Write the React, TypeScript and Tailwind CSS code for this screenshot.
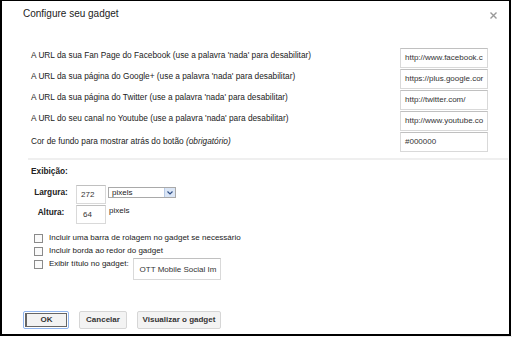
import React from "react";

const urlRows = [
  { label: "A URL da sua Fan Page do Facebook (use a palavra 'nada' para desabilitar)", value: "http://www.facebook.c" },
  { label: "A URL da sua página do Google+ (use a palavra 'nada' para desabilitar)", value: "https://plus.google.cor" },
  { label: "A URL da sua página do Twitter (use a palavra 'nada' para desabilitar)", value: "http://twitter.com/" },
  { label: "A URL do seu canal no Youtube (use a palavra 'nada' para desabilitar)", value: "http://www.youtube.co" },
];

const checks = ["Incluir uma barra de rolagem no gadget se necessário", "Incluir borda ao redor do gadget"];

function TextBox({ value, className }: { value: string; className: string }) {
  return (
    <div
      className={`border border-[#d9d9d9] border-t-[#c0c0c0] bg-white text-[8px] text-[#333] whitespace-nowrap overflow-hidden flex ${className}`}
    >
      {value}
    </div>
  );
}

function Checkbox() {
  return <div className="w-[9px] h-[9px] border border-[#8a8a8a] bg-[#fafafa] shrink-0" />;
}

export default function App() {
  return (
    <div className="w-[512px] h-[337px] bg-white font-['Liberation_Sans',Arial,sans-serif] text-[#222]">
      <div className="w-[511px] h-[336px] border-black border-l-2 border-r-2 border-b-2 border-t flex flex-col">
        {/* header */}
        <div className="flex justify-between items-center pl-[21px] pr-[12px] pt-[6px] h-[20px]">
          <span className="text-[10px] leading-[12px]">Configure seu gadget</span>
          <svg width="7" height="7" viewBox="0 0 7 7" className="mt-[2px]">
            <path d="M0.5 0.5 L6.5 6.5 M6.5 0.5 L0.5 6.5" stroke="#999" strokeWidth="1.4" />
          </svg>
        </div>

        {/* url fields */}
        <div className="flex flex-col gap-[1px] mt-[27px] pl-[29px] pr-[21px]">
          {urlRows.map((r) => (
            <div key={r.label} className="flex justify-between items-start h-[20px]">
              <span className="text-[8.3px] leading-[10px] mt-[2px]">{r.label}</span>
              <TextBox value={r.value} className="w-[88px] h-[20px] items-center pl-[4px]" />
            </div>
          ))}
          <div className="flex justify-between items-start h-[20px]">
            <span className="text-[8.3px] leading-[10px] mt-[4px]">
              Cor de fundo para mostrar atrás do botão <i>(obrigatório)</i>
            </span>
            <TextBox value="#000000" className="w-[88px] h-[20px] items-center pl-[4px]" />
          </div>
        </div>

        <div className="h-[2px] bg-[#efefef] mt-[6px] ml-[26px] mr-[1px]" />

        {/* display options */}
        <div className="pl-[29px] mt-[6px] flex flex-col">
          <span className="text-[8.3px] leading-[10px] font-bold">Exibição:</span>
          <div className="flex items-start mt-[9px]">
            <span className="w-[40px] text-center text-[8.3px] leading-[10px] font-bold mt-[2px]">Largura:</span>
            <TextBox value="272" className="ml-[5px] w-[30px] h-[19px] items-end pb-[2px] pl-[4px]" />
            <div className="ml-[2px] mt-[2px] w-[68px] h-[11px] border border-[#a9a9a9] flex bg-white">
              <span className="flex-1 text-[8px] leading-[9px] pl-[3px] text-[#222]">pixels</span>
              <div className="w-[11px] h-full bg-[#dbe6f6] border-l border-[#b9cbe6] flex items-center justify-center">
                <svg width="6" height="4" viewBox="0 0 6 4">
                  <path d="M0.5 0.5 L3 3 L5.5 0.5" stroke="#2f4f86" strokeWidth="1.2" fill="none" />
                </svg>
              </div>
            </div>
          </div>
          <div className="flex items-start mt-[1px]">
            <span className="w-[40px] text-center text-[8.3px] leading-[10px] font-bold mt-[2px]">Altura:</span>
            <TextBox value="64" className="ml-[5px] w-[30px] h-[19px] items-end pb-[2px] pl-[6px]" />
            <span className="ml-[3px] mt-[1px] text-[8px] leading-[10px]">pixels</span>
          </div>

          <div className="flex flex-col mt-[8px] pl-[3px]">
            {checks.map((c) => (
              <div key={c} className="flex items-center gap-[6px] h-[12px] mb-[1px]">
                <Checkbox />
                <span className="text-[8px] leading-[10px]">{c}</span>
              </div>
            ))}
            <div className="flex items-start gap-[6px]">
              <div className="flex items-center gap-[6px] h-[12px]">
                <Checkbox />
                <span className="text-[8px] leading-[10px]">Exibir título no gadget:</span>
              </div>
              <TextBox value="OTT Mobile Social Im" className="ml-[-2px] w-[88px] h-[22px] items-center pt-[2px] pl-[6px]" />
            </div>
          </div>
        </div>

        {/* buttons */}
        <div className="flex gap-[10px] pl-[21px] mt-auto mb-[5px]">
          <div className="w-[46px] h-[18px] border border-[#8fb4ee] rounded-[2px] p-[1px] flex">
            <div className="flex-1 border border-[#666] border-l-2 bg-[#f3f3f3] flex items-center justify-center text-[8px] font-bold text-[#333]">
              OK
            </div>
          </div>
          <div className="w-[48px] h-[18px] border border-[#d6d6d6] rounded-[2px] bg-[#f3f3f3] flex items-center justify-center text-[8px] font-bold text-[#333]">
            Cancelar
          </div>
          <div className="w-[84px] h-[18px] border border-[#d6d6d6] rounded-[2px] bg-[#f3f3f3] flex items-center justify-center text-[8px] font-bold text-[#333]">
            Visualizar o gadget
          </div>
        </div>
      </div>
      <div className="flex justify-end">
        <div className="w-[52px] h-[1px] bg-[#e8e8e8]" />
      </div>
    </div>
  );
}
